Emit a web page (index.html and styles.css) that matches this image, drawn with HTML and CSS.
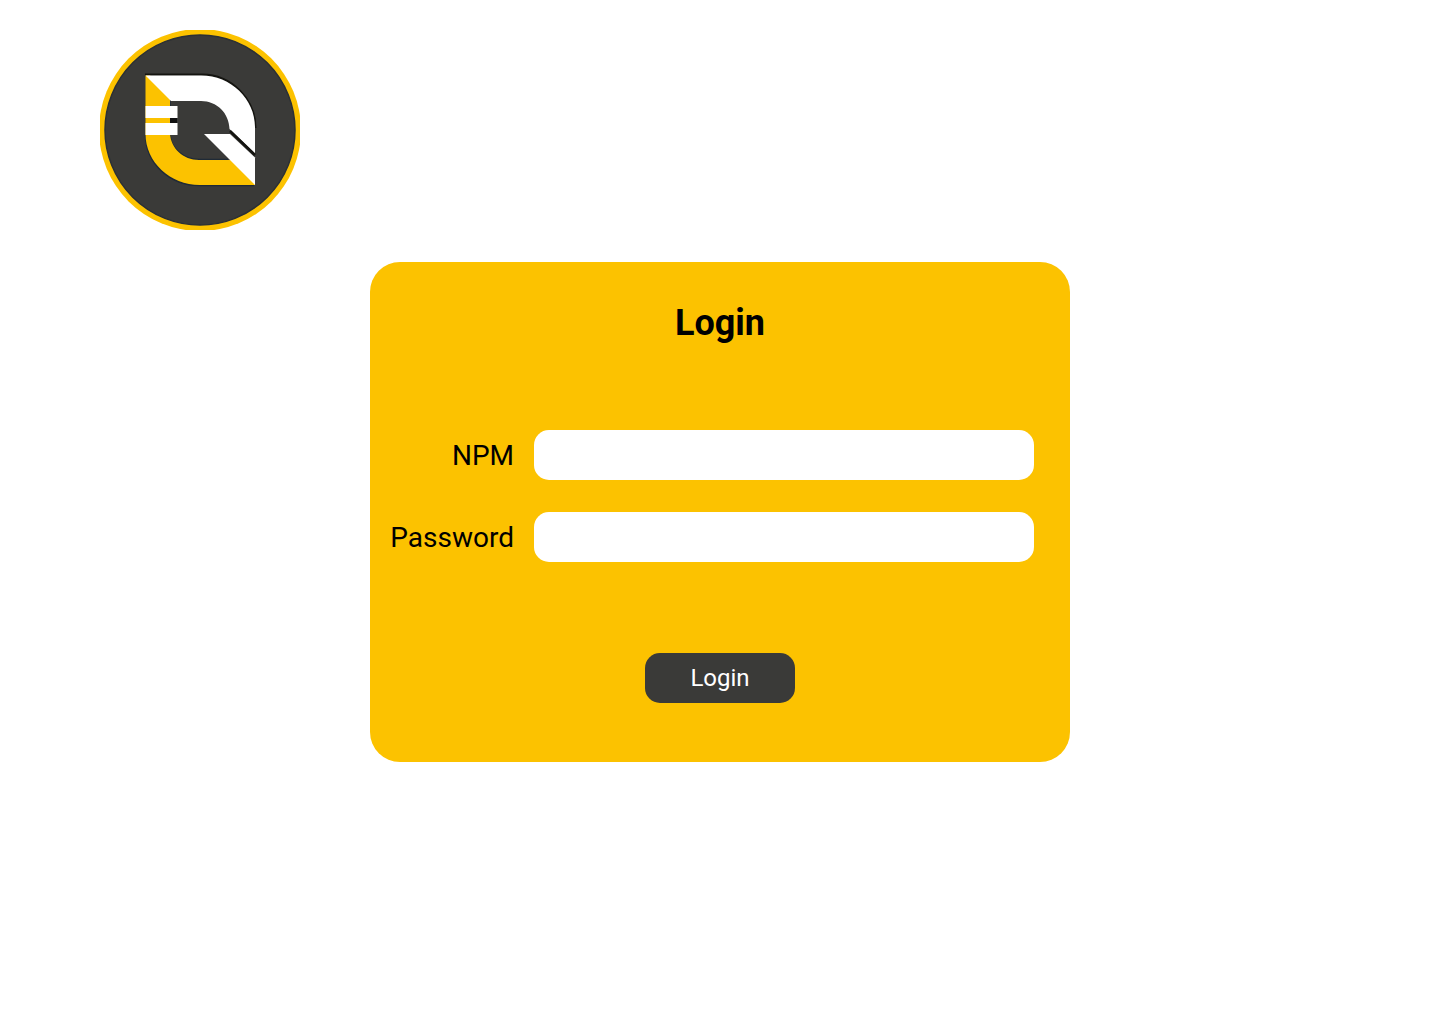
FILE: index.html
```html
<!DOCTYPE html>
<html lang="en">
<head>
  <meta charset="utf-8">
  <meta name="viewport" content="width=device-width, initial-scale=1">
  <title>Login</title>
  <link rel="stylesheet" href="styles.css">
</head>
<body>
  <header class="header">
    <svg class="logo" viewBox="0 0 200 200" role="img" aria-label="Logo">
      <circle cx="100" cy="100" r="101" fill="#fcc200"/>
      <circle cx="100" cy="100" r="95" fill="#3a3a38" stroke="#2b3035" stroke-width="1.5"/>
      <path d="M45 44.500H102C132 44.500 155.500 70 155.500 98" fill="none" stroke="#141410" stroke-width="2"/>
      <path d="M70 71V105C71 118 83 129.500 99 129.500H128M45.500 105C46 134 70 155.500 100 155.500H154" fill="none" stroke="#1f2a36" stroke-width="1.500"/>
      <path d="M45.500 45.500H50L70 66V104C71 118 83 130 99 130H134L155 151V155H100C70 155 45.500 132 45.500 104Z" fill="#fcc200"/>
      <path d="M45.500 45.500H101C131 45.500 155 69 155 97V123.500L129.500 99C129 83 117 71 101 71H71Z" fill="#fff"/>
      <path d="M70 88H77V93H70Z" fill="#101010"/>
      <path d="M45.500 76H77.500V88H45.500ZM45.500 93H77.500V105H45.500Z" fill="#fff"/>
      <path d="M104 104H130L155 127.500V155Z" fill="#fff"/>
      <path d="M130 101L155 125" stroke="#141410" stroke-width="2.500"/>
    </svg>
  </header>
  <main class="main">
    <form class="card">
      <h1 class="title">Login</h1>
      <div class="fields">
        <label class="label" for="npm">NPM</label>
        <input class="input" id="npm" name="npm" type="text">
        <label class="label" for="password">Password</label>
        <input class="input" id="password" name="password" type="password">
      </div>
      <button class="button" type="submit">Login</button>
    </form>
  </main>
</body>
</html>
```
FILE: styles.css
```css
* {
  box-sizing: border-box;
}

body {
  margin: 0;
  background: #fff;
  color: #000;
  font-family: Roboto, "Liberation Sans", sans-serif;
}

.header {
  padding: 30px 100px 32px;
}

.logo {
  display: block;
  width: 200px;
  height: 200px;
}

.main {
  display: flex;
  justify-content: center;
}

.card {
  display: flex;
  flex-direction: column;
  width: 100%;
  max-width: 700px;
  min-height: 500px;
  padding: 40px 0 59px;
  border-radius: 30px;
  background: #fcc200;
}

.title {
  margin: 0;
  font-size: 36px;
  line-height: 42px;
  font-weight: 700;
  text-align: center;
}

.fields {
  display: grid;
  grid-template-columns: 124px 1fr;
  align-items: center;
  gap: 32px 20px;
  margin-top: 86px;
  padding: 0 36px 0 20px;
}

.label {
  font-size: 28px;
  line-height: 33px;
  text-align: right;
}

.input {
  width: 100%;
  height: 50px;
  padding: 0 16px;
  border: 0;
  border-radius: 15px;
  background: #fff;
  font: inherit;
  font-size: 24px;
}

.button {
  width: 150px;
  height: 50px;
  margin: auto auto 0;
  padding: 0;
  border: 0;
  border-radius: 15px;
  background: #3a3a38;
  color: #fff;
  font: inherit;
  font-size: 24px;
  line-height: 28px;
}
```
